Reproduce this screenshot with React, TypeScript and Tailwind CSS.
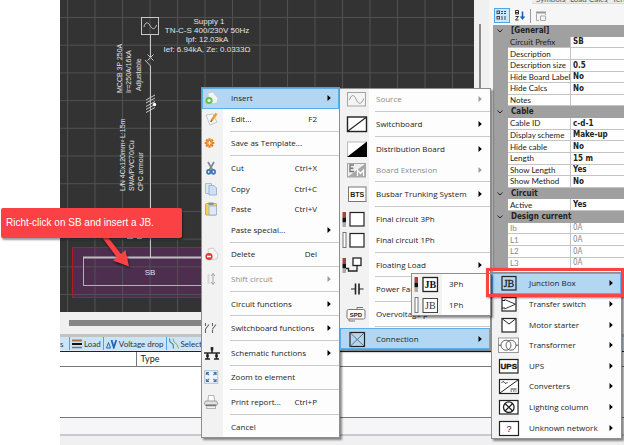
import type { ReactNode } from 'react';
import clsx from 'clsx';

type MenuEntry = {
  label: string;
  icon?: ReactNode;
  shortcut?: string;
  arrow?: boolean;
  disabled?: boolean;
  active?: boolean;
  divider?: boolean;
};

/* ---------- icons ---------- */

function SmallIcon({ children }: { children: ReactNode }) {
  return (
    <svg width="16" height="16" viewBox="0 0 16 16" fill="none">
      {children}
    </svg>
  );
}

function WideIcon({ children }: { children: ReactNode }) {
  return (
    <svg width="28" height="20" viewBox="0 0 28 20" fill="none" stroke="#222">
      {children}
    </svg>
  );
}

const phaseBar = (
  <g stroke="none">
    <rect x="1.5" y="3" width="3.5" height="5.5" fill="#a5443f" />
    <rect x="1.5" y="8.5" width="3.5" height="5" fill="#111" />
    <rect x="1.5" y="13.5" width="3.5" height="4.5" fill="#aaa" />
  </g>
);

const singleBar = (
  <rect x="2" y="2.5" width="3" height="15" fill="#fff" stroke="#777" />
);

const page = (
  <path
    d="M4 3 L9 2 Q11 5 14 8 L13 13 L5 14 Z"
    fill="#f4f4f4"
    stroke="#c4c8c8"
    strokeWidth="0.8"
  />
);

const icons = {
  insert: (
    <SmallIcon>
      {page}
      <circle cx="5" cy="10.5" r="3.6" fill="#5cc748" />
      <circle cx="5" cy="10.5" r="1.6" fill="#e9fbe4" />
    </SmallIcon>
  ),
  edit: (
    <SmallIcon>
      <path d="M2 4 L9 3 L13 11 L6 14 Z" fill="#f7f7f7" stroke="#c4c8c8" />
      <path d="M12.5 2.5 L7.5 9.5" stroke="#f09a2a" strokeWidth="2.4" />
      <path d="M7.6 9.2 L6.8 11" stroke="#555" strokeWidth="1.4" />
    </SmallIcon>
  ),
  template: (
    <SmallIcon>
      <g stroke="#ea7d22" strokeWidth="2.2">
        <path d="M5.5 3.2 V12.8 M0.7 8 H10.3 M2.1 4.6 L8.9 11.4 M8.9 4.6 L2.1 11.4" />
      </g>
      <circle cx="5.5" cy="8" r="3.2" fill="#f08a2c" />
      <path d="M5.5 6 V10 M3.5 8 H7.5" stroke="#fff0d8" />
    </SmallIcon>
  ),
  cut: (
    <SmallIcon>
      <path d="M4 2 L8.6 10 M10 2 L5.4 10" stroke="#7f8b93" strokeWidth="1.7" />
      <ellipse cx="4.7" cy="11.8" rx="1.7" ry="2" stroke="#3b76b5" strokeWidth="1.7" />
      <ellipse cx="9.4" cy="11.8" rx="1.7" ry="2" stroke="#3b76b5" strokeWidth="1.7" />
    </SmallIcon>
  ),
  copy: (
    <SmallIcon>
      <path d="M1.5 2.5 H7.5 V12.5 H1.5 Z" fill="#dce8f6" stroke="#a9bdd8" />
      <path d="M5 4.5 H10 L12.5 7 V14 H5 Z" fill="#cfe0f4" stroke="#9db4d4" />
    </SmallIcon>
  ),
  paste: (
    <SmallIcon>
      <rect x="1.5" y="2.5" width="11" height="11.5" rx="1" fill="#f3d352" stroke="#c9a83c" />
      <rect x="4.5" y="1.5" width="5" height="2.5" fill="#8b9097" />
      <path d="M5 5 H12.5 V14 H5 Z" fill="#dfe9f6" stroke="#a3b6cf" />
    </SmallIcon>
  ),
  remove: (
    <SmallIcon>
      {page}
      <circle cx="5" cy="10.5" r="3.6" fill="#e1382e" />
      <path d="M3 10.5 H7" stroke="#fff" strokeWidth="1.6" />
    </SmallIcon>
  ),
  shift: (
    <SmallIcon>
      <path d="M4.5 3 V13" stroke="#d8d8d8" strokeWidth="2" />
      <path d="M9 2.5 V13.5 M7 5 L9 2.5 L11 5 M7 11 L9 13.5 L11 11" stroke="#a6a6a6" />
    </SmallIcon>
  ),
  switches: (
    <SmallIcon>
      <g stroke="#666" strokeWidth="1.1">
        <path d="M1.5 3 V6 M1.5 9 V13 M1.5 9 L5 4.5" />
        <path d="M8.5 3 V6 M8.5 13 V9.5 M8.5 9 L12 4.5" />
      </g>
    </SmallIcon>
  ),
  schematic: (
    <SmallIcon>
      <g stroke="#222">
        <path d="M0 8 H16" strokeWidth="1.4" />
        <path d="M8 2 V8 M3.5 8 V14 M12.5 8 V14" strokeWidth="1.6" />
        <path d="M1 14 H6 M10 14 H15" strokeWidth="1.4" />
        <path d="M8 2 V5.5" strokeWidth="2.6" />
        <path d="M3.5 9.5 V12 M12.5 9.5 V12" strokeWidth="2.6" />
      </g>
    </SmallIcon>
  ),
  zoom: (
    <SmallIcon>
      <rect x="0.7" y="1.7" width="13" height="12.6" fill="#eef4fb" stroke="#b7bfc9" />
      <g stroke="#3e74b8" strokeWidth="1.2">
        <path d="M2.5 6 V3.5 H5 M2.5 3.5 L5 6" />
        <path d="M12 6 V3.5 H9.5 M12 3.5 L9.5 6" />
        <path d="M2.5 10 V12.5 H5 M2.5 12.5 L5 10" />
        <path d="M12 10 V12.5 H9.5 M12 12.5 L9.5 10" />
      </g>
    </SmallIcon>
  ),
  print: (
    <SmallIcon>
      <path d="M4 7 L4.5 1.5 H10 L10.5 7" fill="#fff" stroke="#b5b5b5" />
      <rect x="0.7" y="7" width="12.6" height="4.5" rx="1.5" fill="#e2e2e2" stroke="#9a9a9a" />
      <path d="M2 11.3 H12" stroke="#333" strokeWidth="1.3" />
      <rect x="2.5" y="12" width="9" height="2.5" fill="#f2f2f2" stroke="#b5b5b5" />
    </SmallIcon>
  ),
};

const boxIcons = {
  source: (
    <WideIcon>
      <rect x="6.5" y="3.5" width="18" height="13.5" fill="#f4f4f4" stroke="#a5a5a5" />
      <path d="M8.5 11 C10 5.5 13 5 15 10 S20 16.5 22.8 9.5" stroke="#9a9a9a" />
    </WideIcon>
  ),
  switchboard: (
    <WideIcon>
      <rect x="6.5" y="3" width="19" height="14.5" fill="#fff" strokeWidth="1.4" />
      <path d="M7 17 L25 3.5" strokeWidth="1.2" />
    </WideIcon>
  ),
  distribution: (
    <WideIcon>
      <rect x="6.5" y="3" width="19" height="14.5" fill="#fff" stroke="#bbb" />
      <path d="M6 18 L26 2.5 V18 Z" fill="#000" stroke="none" />
    </WideIcon>
  ),
  extension: (
    <WideIcon>
      <rect x="6.5" y="3.5" width="18" height="13.5" fill="#eee" stroke="#a5a5a5" />
      <path d="M6.5 17 L24.5 3.5 V17 Z" fill="#a8a8a8" stroke="none" />
      <path d="M13 5 H9 V11.5 H13 M9 8.2 H12.4" stroke="#777" strokeWidth="1.4" />
      <path d="M16.5 16 V10 L19.5 13.5 L22.5 10 V16" stroke="#fff" strokeWidth="1.2" />
    </WideIcon>
  ),
  bts: (
    <WideIcon>
      <rect x="7.5" y="3" width="17.5" height="14.5" fill="#fff" stroke="#777" />
      <text x="16.2" y="12.5" textAnchor="middle" fontSize="7" fontWeight="700" stroke="none" fill="#222" fontFamily="Liberation Sans, sans-serif">
        BTS
      </text>
    </WideIcon>
  ),
  final3: (
    <WideIcon>
      {phaseBar}
      <rect x="9" y="3.5" width="14" height="13.5" fill="#fff" strokeWidth="1.2" />
    </WideIcon>
  ),
  final1: (
    <WideIcon>
      {singleBar}
      <rect x="9" y="3.5" width="14" height="13.5" fill="#fff" strokeWidth="1.2" />
    </WideIcon>
  ),
  floating: (
    <WideIcon>
      {phaseBar}
      <rect x="12" y="3" width="8" height="7.5" fill="#fff" strokeWidth="1.3" />
      <path d="M5 13.5 H7.5 V16 H16 V10.5" strokeWidth="1.3" />
    </WideIcon>
  ),
  capacitor: (
    <WideIcon>
      <path d="M10 10 H14.5 M18 10 H22.5" />
      <path d="M14.5 4.5 V15.5 M18 4.5 V15.5" strokeWidth="1.6" />
    </WideIcon>
  ),
  spd: (
    <WideIcon>
      <rect x="6" y="5.5" width="18" height="9.5" rx="1.5" fill="#fff" stroke="#777" />
      <path d="M16 5.5 V3.5 H22 M8 15 V17 H14" stroke="#777" />
      <text x="15" y="12.5" textAnchor="middle" fontSize="6" fontWeight="700" stroke="none" fill="#222" fontFamily="Liberation Sans, sans-serif">
        SPD
      </text>
    </WideIcon>
  ),
  connection: (
    <WideIcon>
      <rect x="9" y="3.5" width="14.5" height="14" strokeWidth="1.2" />
      <path d="M9 3.5 L23.5 17.5 M23.5 3.5 L9 17.5" stroke="#555" strokeWidth="0.8" />
    </WideIcon>
  ),
  junction: (
    <WideIcon>
      <rect x="9" y="3.5" width="14" height="13.5" strokeWidth="1.2" />
      <text x="16" y="14" textAnchor="middle" fontSize="10" stroke="#222" strokeWidth="0.3" fill="#222" fontFamily="Liberation Serif, serif">
        JB
      </text>
    </WideIcon>
  ),
  transfer: (
    <WideIcon>
      <rect x="9" y="3.5" width="14" height="13.5" fill="#fff" strokeWidth="1.2" />
      <path d="M11.5 5.5 L22.5 10.2 L11.5 15" strokeWidth="0.9" />
      <path d="M9 6.5 H12 M9 14 H12" />
    </WideIcon>
  ),
  motor: (
    <WideIcon>
      <rect x="9" y="3.5" width="14" height="13.5" fill="#fff" strokeWidth="1.2" />
      <path d="M9.5 4 L16 9 L22.5 4" />
    </WideIcon>
  ),
  transformer: (
    <WideIcon>
      <rect x="5.5" y="3" width="20" height="14.5" fill="#fff" stroke="#999" />
      <circle cx="13" cy="10.2" r="5" stroke="#555" strokeWidth="0.9" />
      <circle cx="18" cy="10.2" r="5" stroke="#555" strokeWidth="0.9" />
      <path d="M5.5 10.2 H8 M23 10.2 H25.5" stroke="#555" />
    </WideIcon>
  ),
  ups: (
    <WideIcon>
      <rect x="6.5" y="3.5" width="18.5" height="13.5" fill="#fff" strokeWidth="1.2" />
      <text x="15.8" y="13" textAnchor="middle" fontSize="8" fontWeight="700" strokeWidth="0.4" fill="#111" fontFamily="Liberation Sans, sans-serif">
        UPS
      </text>
    </WideIcon>
  ),
  converters: (
    <WideIcon>
      <rect x="6.5" y="3.5" width="19" height="14" fill="#fff" strokeWidth="1.2" />
      <path d="M7 17 L25 4" />
      <path d="M8.5 7 Q10 4 11.5 6.5 T14.5 6" strokeWidth="0.9" />
      <path d="M17.5 13 H23.5 M17.5 15 H19 M20 15 H21.5 M22.5 15 H23.5" strokeWidth="0.9" />
    </WideIcon>
  ),
  lighting: (
    <WideIcon>
      <rect x="6.5" y="3.5" width="18.5" height="13.5" fill="#fff" strokeWidth="1.2" />
      <circle cx="15.8" cy="10.2" r="5.3" strokeWidth="1.3" />
      <path d="M12 6.5 L19.6 14 M19.6 6.5 L12 14" strokeWidth="1.3" />
    </WideIcon>
  ),
  unknown: (
    <WideIcon>
      <rect x="6.5" y="3.5" width="19" height="14" fill="#fff" strokeWidth="1.2" />
      <text x="16" y="13.5" textAnchor="middle" fontSize="9" stroke="none" fill="#222" fontFamily="Liberation Sans, sans-serif">
        ?
      </text>
    </WideIcon>
  ),
  jb3: (
    <WideIcon>
      {phaseBar}
      <rect x="10" y="3.5" width="14.5" height="14" fill="#fff" strokeWidth="1.3" />
      <text x="17.3" y="14" textAnchor="middle" fontSize="10" fontWeight="700" stroke="none" fill="#111" fontFamily="Liberation Serif, serif">
        JB
      </text>
    </WideIcon>
  ),
  jb1: (
    <WideIcon>
      {singleBar}
      <rect x="10" y="3.5" width="14.5" height="14" fill="#fff" stroke="#444" />
      <text x="17.3" y="14" textAnchor="middle" fontSize="10" stroke="none" fill="#333" fontFamily="Liberation Serif, serif">
        JB
      </text>
    </WideIcon>
  ),
};

/* ---------- data ---------- */

const mainMenu: MenuEntry[] = [
  { label: 'Insert', icon: icons.insert, arrow: true, active: true },
  { label: 'Edit...', icon: icons.edit, shortcut: 'F2', divider: true },
  { label: 'Save as Template...', icon: icons.template, divider: true },
  { label: 'Cut', icon: icons.cut, shortcut: 'Ctrl+X' },
  { label: 'Copy', icon: icons.copy, shortcut: 'Ctrl+C' },
  { label: 'Paste', icon: icons.paste, shortcut: 'Ctrl+V' },
  { label: 'Paste special...', arrow: true, divider: true },
  { label: 'Delete', icon: icons.remove, shortcut: 'Del', divider: true },
  { label: 'Shift circuit', icon: icons.shift, arrow: true, disabled: true, divider: true },
  { label: 'Circuit functions', arrow: true, divider: true },
  { label: 'Switchboard functions', icon: icons.switches, arrow: true, divider: true },
  { label: 'Schematic functions', icon: icons.schematic, arrow: true, divider: true },
  { label: 'Zoom to element', icon: icons.zoom, divider: true },
  { label: 'Print report...', icon: icons.print, shortcut: 'Ctrl+P', divider: true },
  { label: 'Cancel' },
];

const insertMenu: MenuEntry[] = [
  { label: 'Source', icon: boxIcons.source, arrow: true, disabled: true, divider: true },
  { label: 'Switchboard', icon: boxIcons.switchboard, arrow: true, divider: true },
  { label: 'Distribution Board', icon: boxIcons.distribution, arrow: true },
  { label: 'Board Extension', icon: boxIcons.extension, arrow: true, disabled: true, divider: true },
  { label: 'Busbar Trunking System', icon: boxIcons.bts, arrow: true, divider: true },
  { label: 'Final circuit 3Ph', icon: boxIcons.final3 },
  { label: 'Final circuit 1Ph', icon: boxIcons.final1, divider: true },
  { label: 'Floating Load', icon: boxIcons.floating, arrow: true, divider: true },
  { label: 'Power Fac', icon: boxIcons.capacitor, divider: true },
  { label: 'Overvoltage p', icon: boxIcons.spd, divider: true },
  { label: 'Connection', icon: boxIcons.connection, arrow: true, active: true },
];

const connectionMenu: MenuEntry[] = [
  { label: 'Junction Box', icon: boxIcons.junction, arrow: true, active: true },
  { label: 'Transfer switch', icon: boxIcons.transfer, arrow: true },
  { label: 'Motor starter', icon: boxIcons.motor, arrow: true },
  { label: 'Transformer', icon: boxIcons.transformer, arrow: true },
  { label: 'UPS', icon: boxIcons.ups, arrow: true },
  { label: 'Converters', icon: boxIcons.converters, arrow: true },
  { label: 'Lighting column', icon: boxIcons.lighting, arrow: true },
  { label: 'Unknown network', icon: boxIcons.unknown, arrow: true },
];

const phaseMenu: MenuEntry[] = [
  { label: '3Ph', icon: boxIcons.jb3 },
  { label: '1Ph', icon: boxIcons.jb1 },
];

const properties = [
  {
    title: '[General]',
    rows: [
      ['Circuit Prefix', 'SB'],
      ['Description', ''],
      ['Description size', '0.5'],
      ['Hide Board Label', 'No'],
      ['Hide Calcs', 'No'],
      ['Notes', ''],
    ],
  },
  {
    title: 'Cable',
    rows: [
      ['Cable ID', 'c-d-1'],
      ['Display scheme', 'Make-up'],
      ['Hide cable', 'No'],
      ['Length', '15 m'],
      ['Show Length', 'Yes'],
      ['Show Method', 'No'],
    ],
  },
  { title: 'Circuit', rows: [['Active', 'Yes']] },
  {
    title: 'Design current',
    readOnly: true,
    rows: [
      ['Ib', '0A'],
      ['L1', '0A'],
      ['L2', '0A'],
      ['L3', '0A'],
    ],
  },
];

/* ---------- menus ---------- */

function Menu({
  name,
  entries,
  className,
  iconClass,
  dividerClass,
}: {
  name: string;
  entries: MenuEntry[];
  className: string;
  iconClass: string;
  dividerClass: string;
}) {
  return (
    <ul
      role="menu"
      aria-label={name}
      className={clsx(
        "absolute flex flex-col border border-[#8e8e8e] font-['Open_Sans','Noto_Sans',sans-serif] text-[8px] leading-3 text-[#1c1c1c] shadow-[2px_2px_2px_rgba(0,0,0,0.45)]",
        className,
      )}
    >
      {entries.map((entry) => (
        <li
          key={entry.label}
          role="none"
          className={clsx('flex flex-col', entry.divider ? 'flex-[1_1_4px]' : 'flex-1')}
        >
          <button
            type="button"
            role="menuitem"
            disabled={entry.disabled}
            className={clsx(
              'relative flex w-full flex-1 items-center whitespace-nowrap border pr-[7px] text-left',
              entry.active ? 'border-[#5aaeea] bg-[#b3d7f3]' : 'border-transparent',
              entry.disabled && 'text-[#8c8c8c]',
            )}
          >
            <span className={clsx('flex h-4 shrink-0 items-center', iconClass)}>{entry.icon}</span>
            <span className="flex-1">{entry.label}</span>
            {entry.shortcut && <span className="mr-[14px]">{entry.shortcut}</span>}
            {entry.arrow && (
              <svg width="4" height="6" viewBox="0 0 4 6" fill={entry.disabled ? '#9a9a9a' : '#000'}>
                <path d="M0.5 0 L3.8 3 L0.5 6 Z" />
              </svg>
            )}
          </button>
          {entry.divider && (
            <div className={clsx('flex h-1 items-center', dividerClass)}>
              <div className="h-px w-full bg-[#c9c9c9]" />
            </div>
          )}
        </li>
      ))}
    </ul>
  );
}

/* ---------- schematic ---------- */

function Schematic() {
  return (
    <div className="min-h-0 flex-1 overflow-hidden bg-[#333]">
      <svg width="100%" height="312" fill="none">
        <defs>
          <pattern id="grid" x="7" y="17" width="27.5" height="27.7" patternUnits="userSpaceOnUse">
            <path d="M0.5 0 V28 M0 0.5 H28" stroke="#505050" />
          </pattern>
        </defs>
        <rect x="12.5" y="247.5" width="389" height="50" fill="#4d2e4f" />
        <rect width="100%" height="312" fill="url(#grid)" />
        <rect x="12.5" y="247.5" width="389" height="50" stroke="#b01c20" />
        <rect x="23.5" y="257.5" width="366" height="28" stroke="#b9aebb" />
        <path d="M23 257.5 H390" stroke="#c4bcc6" strokeWidth="2" />

        <g stroke="#c8c8c8">
          <rect x="81.5" y="17.5" width="17" height="17" />
          <path d="M84 27 C85 22 88 21.5 90 25.5 S95 30 96.5 25" />
          <path d="M90.5 34.5 V57 M90.5 66 V257" />
          <path d="M87.5 54.5 L93.5 60.5 M93.5 54.5 L87.5 60.5 M85 60 L90.5 66" />
          <path d="M86 100 L95 95 M86 103 L95 98 M86 106.5 L95 101.5 M86 109.5 L95 104.5 M86 112.5 L95 107.5" />
          <path d="M67 238.5 H73 M77 238.5 H82" />
        </g>
        <circle cx="94.5" cy="104.5" r="1.7" fill="#fff" />

        <g fill="#e2e2e2" fontSize="8" fontFamily="Liberation Sans, sans-serif">
          <g textAnchor="middle">
            <text x="149" y="24">Supply 1</text>
            <text x="147" y="33">TN-C-S 400/230V 50Hz</text>
            <text x="147" y="42">Ipf: 12.03kA</text>
            <text x="147" y="52">Ief: 6.94kA, Ze: 0.0333Ω</text>
            <text x="90" y="275">SB</text>
          </g>
          <g fontSize="7">
            <text transform="translate(62 93) rotate(-90)">MCCB 3P 250A</text>
            <text transform="translate(71 93) rotate(-90)">Ir=250A/16kA</text>
            <text transform="translate(81 91) rotate(-90)">Adjustable</text>
            <text transform="translate(65 191) rotate(-90)">L/N 4Cx120mm² L:15m</text>
            <text transform="translate(74 191) rotate(-90)">SWA/PVC70/Cu</text>
            <text transform="translate(83 191) rotate(-90)">CPC armour</text>
          </g>
        </g>
      </svg>
    </div>
  );
}

/* ---------- property grid ---------- */

function PropertyPanel() {
  return (
    <aside className="flex w-[135px] flex-col bg-[#f6f6f6] text-[8px] leading-none text-[#222]">
      <div className="ml-[43px] flex h-1 items-end overflow-hidden whitespace-nowrap border-b border-[#d8d8d8] bg-[#ececec] text-[#555]">
        <span className="w-[33px] pl-1">Symbols</span>
        <span className="w-[43px] border-l border-[#c8c8c8] pl-1">Load Calcs</span>
        <span className="border-l border-[#c8c8c8] pl-1">Terms</span>
      </div>
      <div className="flex h-[21px] items-center gap-1 pt-1 pb-[2px] pl-[5px]">
        <button type="button" aria-label="Categorized" className="flex h-[15px] w-4 items-center justify-center border border-[#4ea6ea] bg-[#cde6f9]">
          <svg width="12" height="11" viewBox="0 0 12 11" fill="none" stroke="#444">
            <rect x="1" y="1" width="2.5" height="2.5" />
            <rect x="1" y="6.5" width="2.5" height="2.5" />
            <path d="M5 1.5 H7 M8 1.5 H10 M5 3.5 H7 M8 3.5 H10 M5 7 H7 M8 7 H10 M5 9 H7 M8 9 H10" />
          </svg>
        </button>
        <button type="button" aria-label="Alphabetical" className="flex h-4 w-3 items-center justify-center">
          <svg width="12" height="13" viewBox="0 0 12 13" fill="none" stroke="#333">
            <path d="M1.5 1.5 H4.5 V5 H1.5 Z M1.5 3.5 H4.5" />
            <path d="M1.5 7.5 H4.5 L1.5 11 H4.5" />
            <path d="M8.5 2.5 V9" stroke="#1663b5" strokeWidth="1.6" />
            <path d="M5.8 7.5 H11.2 L8.5 11 Z" fill="#1663b5" stroke="none" />
          </svg>
        </button>
        <div className="h-[14px] w-px bg-[#999]" />
        <button type="button" aria-label="Property pages" className="flex h-4 w-3 items-center justify-center">
          <svg width="12" height="12" viewBox="0 0 12 12" fill="none" stroke="#aaa">
            <path d="M1 2.5 H11" stroke="#999" strokeWidth="2" />
            <path d="M1.5 4 V10.5 H4 M10.5 4 V5 M5.5 6 H10.5 V10.5 H5.5 Z" />
          </svg>
        </button>
      </div>
      <div className="ml-1 flex h-[244px] flex-col bg-[#a0a0a0]">
        {properties.map((group) => (
          <div key={group.title} className="contents">
            <div className="flex min-h-0 flex-1 items-center pl-1 font-['DejaVu_Sans_Condensed','DejaVu_Sans',sans-serif] font-bold">
              <svg width="6" height="4" viewBox="0 0 6 4" fill="none" stroke="#222">
                <path d="M0.5 0.5 L3 3 L5.5 0.5" />
              </svg>
              <span className="pl-2">{group.title}</span>
            </div>
            {group.rows.map(([name, value]) => (
              <div key={name} className={clsx('flex min-h-0 flex-1 pl-[15px]', group.readOnly && 'text-[#888]')}>
                <label
                  htmlFor={name}
                  className={clsx(
                    'flex w-[62px] items-center border-b border-[#c4c4c4] pl-[2px] whitespace-nowrap',
                    name !== 'Circuit Prefix' && 'bg-white',
                  )}
                >
                  {name}
                </label>
                <input
                  id={name}
                  defaultValue={value}
                  readOnly={group.readOnly}
                  className={clsx(
                    "min-h-0 min-w-0 flex-1 border-b border-l border-[#c4c4c4] bg-white pl-[2px] font-['DejaVu_Sans_Condensed','DejaVu_Sans',sans-serif]",
                    !group.readOnly && 'font-bold',
                  )}
                />
              </div>
            ))}
          </div>
        ))}
      </div>
    </aside>
  );
}

/* ---------- bottom ---------- */

const tabClass = 'flex h-[13px] items-center gap-[2px] border-l border-[#4aa3e8] bg-[#cbe4f8] px-[2px]';

function BottomPanel() {
  return (
    <section className="flex flex-1 flex-col">
      <div className="flex h-[18px] items-end border-t-[3px] border-b border-t-[#c3c3c3] border-b-[#222] bg-[#dcebf7] pb-px text-[8px] leading-none text-[#333]">
        <button type="button" className="h-[13px] w-[9px] bg-[#cbe4f8] text-left">
          s
        </button>
        <button type="button" className={tabClass}>
          <svg width="10" height="10" viewBox="0 0 10 10">
            <path d="M0 1.5 H10" stroke="#b8743a" strokeWidth="2" />
            <path d="M0 5 H10" stroke="#111" strokeWidth="2" />
            <path d="M0 8.5 H10" stroke="#777" strokeWidth="1.5" />
          </svg>
          Load
        </button>
        <button type="button" className={tabClass}>
          <svg width="11" height="10" viewBox="0 0 11 10" fill="none" stroke="#2465b4">
            <path d="M0.5 9 L2.5 3.5 L4.5 9 Z" />
            <path d="M5.5 1 L7.8 8.5 L10.3 1" strokeWidth="1.8" />
          </svg>
          Voltage drop
        </button>
        <button type="button" className={tabClass}>
          <svg width="10" height="11" viewBox="0 0 10 11" fill="none">
            <path d="M0.5 0.5 L1 4 L4 6 L4.5 10.5" stroke="#2b6dbb" />
            <path d="M4 0.5 L5 4 L8 6.5 L9.5 10.5" stroke="#8fae3c" />
          </svg>
          Selectivity
        </button>
      </div>
      <table className="w-full border-b border-[#777] bg-white text-[9px] leading-3 text-[#222]">
        <thead>
          <tr className="h-[14px]">
            <th aria-label="Name" className="w-[76px] border-b border-[#777]" />
            <th className="border-b border-l border-[#777] pl-1 text-left font-normal">Type</th>
          </tr>
        </thead>
        <tbody>
          <tr className="h-[51px]">
            <td colSpan={2} />
          </tr>
        </tbody>
      </table>
      <div className="h-[18px] border-b-2 border-[#c9c9cf] bg-[#f6f6f8]" />
      <div className="flex-1 bg-[#f0f0f0]" />
    </section>
  );
}

export default function App() {
  return (
    <main className="relative flex min-h-screen overflow-hidden bg-white font-['Lato','Open_Sans',sans-serif]">
      <div className="ml-[60px] flex min-w-0 flex-1 flex-col bg-[#f0f0f0]">
        <div className="flex h-[334px]">
          <div className="flex min-w-0 flex-1 flex-col">
            <Schematic />
            <div className="flex h-[22px] items-center pl-[9px]">
              <div className="h-[6px] flex-1 bg-[#858585]" />
            </div>
          </div>
          <div className="w-[15px] bg-[#f0f0f0] pt-6 pl-[5px]">
            <div className="h-[260px] w-[2px] bg-[#8a8a8a]" />
          </div>
          <PropertyPanel />
        </div>
        <BottomPanel />
      </div>

      <Menu
        name="Circuit"
        entries={mainMenu}
        className="top-[87px] left-[201px] z-10 h-[351px] w-[139px] bg-[linear-gradient(to_right,#f2f2f2_21px,#fdfdfd_21px)]"
        iconClass="w-7 pl-px"
        dividerClass="ml-7"
      />
      <Menu
        name="Insert"
        entries={insertMenu}
        className="top-[88px] left-[339px] z-10 h-[262px] w-[152px] bg-[linear-gradient(to_right,#f2f2f2_29px,#fdfdfd_29px)]"
        iconClass="w-[35px]"
        dividerClass="ml-[35px]"
      />
      <Menu
        name="Connection"
        entries={connectionMenu}
        className="top-[272px] left-[491px] z-10 h-[167px] w-[131px] bg-[linear-gradient(to_right,#f2f2f2_27px,#fdfdfd_27px)]"
        iconClass="w-9"
        dividerClass="ml-9"
      />
      <Menu
        name="Junction Box"
        entries={phaseMenu}
        className="top-[273px] left-[411px] z-10 h-[43px] w-[80px] bg-[linear-gradient(to_right,#f2f2f2_30px,#fdfdfd_30px)]"
        iconClass="w-9"
        dividerClass="ml-9"
      />

      <div className="absolute top-[268px] left-[486px] z-20 h-[29px] w-[138px] border-[3px] border-[#f94444] shadow-[1px_1px_2px_rgba(0,0,0,0.5)]" />

      <svg className="absolute top-[234px] left-[96px] z-20 drop-shadow-[1px_2px_1px_rgba(0,0,0,0.5)]" width="40" height="36" viewBox="0 0 40 36" fill="#fb4143">
        <path d="M5 2 L11 2 L25 20 L29.5 16 L33 32.5 L17 26.5 L21 23.5 Z" />
      </svg>
      <p className="absolute top-[208px] left-px z-20 flex h-[30px] w-[181px] items-center rounded-xs bg-[#fb4143] pl-[5px] font-['Liberation_Sans',sans-serif] text-[10px] leading-3 text-white shadow-[1px_2px_2px_rgba(0,0,0,0.4)]">
        Richt-click on SB and insert a JB.
      </p>
    </main>
  );
}
